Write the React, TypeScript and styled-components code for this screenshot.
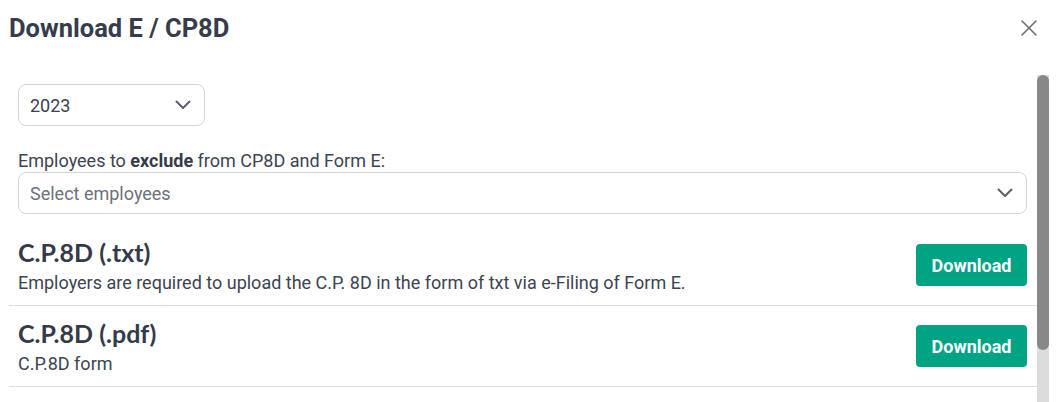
import React from "react";
import styled, { createGlobalStyle } from "styled-components";

const Global = createGlobalStyle`
  html, body { margin: 0; padding: 0; height: 402px; overflow: hidden; background: #fff; }
  body { font-family: Roboto, "Liberation Sans", Arial, sans-serif; color: #3b4150; }
  * { box-sizing: border-box; }
`;

const Modal = styled.div`
  width: 1057px;
  height: 402px;
  display: flex;
  flex-direction: column;
  background: #fff;
`;

const Header = styled.div`
  height: 56px;
  flex: none;
  display: flex;
  align-items: center;
  justify-content: space-between;
  padding: 0 20px 0 9px;
`;

const Title = styled.h2`
  margin: 0;
  font-family: Roboto, "Liberation Sans", sans-serif;
  font-size: 25.5px;
  font-weight: 700;
  color: #363c49;
`;

const CloseButton = styled.button`
  border: 0;
  background: none;
  padding: 0;
  width: 16px;
  height: 16px;
  display: flex;
  cursor: pointer;
`;

const Body = styled.div`
  margin-top: 19px;
  margin-right: 8px;
  flex: 1;
  min-height: 0;
  display: flex;
`;

const ScrollContent = styled.div`
  flex: 1;
  min-width: 0;
  overflow: hidden;
  padding-left: 9px;
`;

const ScrollTrack = styled.div`
  width: 12px;
  flex: none;
  background: #dcdcdc;
  display: flex;
  flex-direction: column;
`;

const ScrollThumb = styled.div`
  height: 275px;
  background: #888888;
  border-radius: 6px;
`;

const Filters = styled.div`
  padding: 9px 10px 11px 9px;
  display: flex;
  flex-direction: column;
`;

const SelectBox = styled.div<{ $width?: string }>`
  width: ${(p) => p.$width ?? "100%"};
  height: 42px;
  border: 1px solid #d3d5dc;
  border-radius: 8px;
  display: flex;
  align-items: center;
  justify-content: space-between;
  padding: 0 13px 0 11px;
  font-size: 18px;
  background: #fff;
`;

const SelectValue = styled.span<{ $placeholder?: boolean }>`
  color: ${(p) => (p.$placeholder ? "#6c717c" : "#3b4150")};
`;

const Label = styled.label`
  margin-top: 24px;
  margin-bottom: 0;
  font-size: 18px;
  line-height: 22px;
  color: #3d4452;
  b { font-weight: 700; color: #353b48; }
`;

const Row = styled.div`
  min-height: 81px;
  display: flex;
  align-items: center;
  justify-content: space-between;
  padding: 0 10px 0 9px;
  border-bottom: 1px solid #dedede;
`;

const RowText = styled.div`
  display: flex;
  flex-direction: column;
  gap: 6px;
  padding-top: 2px;
`;

const RowTitle = styled.h3`
  margin: 0;
  font-family: Lato, "Liberation Sans", sans-serif;
  font-size: 25px;
  line-height: 28px;
  font-weight: 700;
  color: #343a48;
`;

const RowDesc = styled.p`
  margin: 0;
  font-size: 18px;
  line-height: 22px;
  color: #3d4452;
`;

const DownloadButton = styled.button`
  width: 111px;
  height: 42px;
  flex: none;
  border: 0;
  border-radius: 4px;
  background: #00a383;
  color: #fff;
  font-family: Roboto, "Liberation Sans", sans-serif;
  font-size: 18px;
  font-weight: 700;
  cursor: pointer;
`;

const Chevron = () => (
  <svg width="16" height="10" viewBox="0 0 16 10" fill="none">
    <polyline points="1.5,1.5 8,8 14.5,1.5" stroke="#5a606c" strokeWidth="2" strokeLinecap="round" strokeLinejoin="round" />
  </svg>
);

const rows = [
  { title: "C.P.8D (.txt)", desc: "Employers are required to upload the C.P. 8D in the form of txt via e-Filing of Form E." },
  { title: "C.P.8D (.pdf)", desc: "C.P.8D form" },
];

export default function App() {
  return (
    <>
      <Global />
      <Modal>
        <Header>
          <Title>Download E / CP8D</Title>
          <CloseButton aria-label="Close">
            <svg width="16" height="16" viewBox="0 0 16 16" fill="none">
              <path d="M1 1L15 15M15 1L1 15" stroke="#6b7079" strokeWidth="1.6" strokeLinecap="round" />
            </svg>
          </CloseButton>
        </Header>
        <Body>
          <ScrollContent>
            <Filters>
              <SelectBox $width="187px">
                <SelectValue>2023</SelectValue>
                <Chevron />
              </SelectBox>
              <Label>
                Employees to <b>exclude</b> from CP8D and Form E:
              </Label>
              <SelectBox>
                <SelectValue $placeholder>Select employees</SelectValue>
                <Chevron />
              </SelectBox>
            </Filters>
            {rows.map((r) => (
              <Row key={r.title}>
                <RowText>
                  <RowTitle>{r.title}</RowTitle>
                  <RowDesc>{r.desc}</RowDesc>
                </RowText>
                <DownloadButton>Download</DownloadButton>
              </Row>
            ))}
          </ScrollContent>
          <ScrollTrack>
            <ScrollThumb />
          </ScrollTrack>
        </Body>
      </Modal>
    </>
  );
}
